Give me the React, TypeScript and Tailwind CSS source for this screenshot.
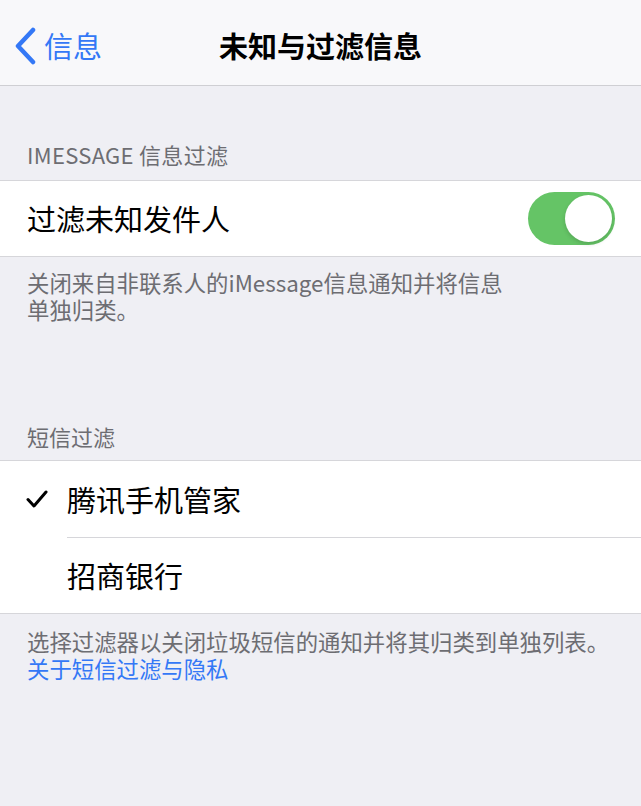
import React from "react";

const font = { fontFamily: '"Noto Sans CJK SC", "Inter", sans-serif' };

export default function App() {
  return (
    <div
      className="w-[641px] h-[806px] bg-[#efeff4] overflow-hidden"
      style={font}
    >
      {/* Nav bar */}
      <div className="relative h-[86px] bg-[#f8f8fa] border-b border-[#cfcfd3] flex items-center">
        <div className="flex items-center pl-[14px] pt-[6px] text-[#3478f6]">
          <svg width="24" height="38" viewBox="0 0 24 38">
            <path
              d="M19 3 L4 19 L19 35"
              fill="none"
              stroke="#3478f6"
              strokeWidth="4.5"
              strokeLinecap="round"
              strokeLinejoin="round"
            />
          </svg>
          <span className="ml-[6px] text-[29px] leading-none">信息</span>
        </div>
        <div className="absolute inset-0 flex items-center justify-center pt-[6px]">
          <span className="text-[29px] font-semibold leading-none text-black">
            未知与过滤信息
          </span>
        </div>
      </div>

      {/* Section 1 header */}
      <div className="h-[94px] flex items-end pb-[15px] pl-[27px]">
        <span className="text-[22px] leading-none text-[#6d6d72] tracking-[0.3px]">
          IMESSAGE 信息过滤
        </span>
      </div>

      {/* Section 1 group */}
      <div className="bg-white border-y border-[#d6d6da] h-[77px] flex items-center pl-[27px] pr-[26px]">
        <span className="flex-1 text-[29px] leading-none text-black">
          过滤未知发件人
        </span>
        <div className="w-[87px] h-[53px] rounded-full bg-[#65c466] relative">
          <div className="absolute right-[3px] top-[3px] w-[47px] h-[47px] rounded-full bg-white shadow-[0_2px_4px_rgba(0,0,0,0.15)]" />
        </div>
      </div>

      {/* Section 1 footer */}
      <div className="pl-[27px] pt-[12px] text-[22.4px] leading-[27px] text-[#6d6d72]">
        <div>关闭来自非联系人的iMessage信息通知并将信息</div>
        <div>单独归类。</div>
      </div>

      {/* Section 2 header */}
      <div className="h-[137px] flex items-end pb-[13px] pl-[27px]">
        <span className="text-[22px] leading-none text-[#6d6d72]">短信过滤</span>
      </div>

      {/* Section 2 group */}
      <div className="bg-white border-y border-[#d6d6da]">
        <div className="h-[76px] flex items-center">
          <div className="w-[67px] flex justify-start pl-[26px]">
            <svg width="22" height="20" viewBox="0 0 22 20">
              <path
                d="M2 10.5 L8 17 L20 3"
                fill="none"
                stroke="#000"
                strokeWidth="3"
                strokeLinecap="round"
                strokeLinejoin="round"
              />
            </svg>
          </div>
          <span className="text-[29px] leading-none text-black">腾讯手机管家</span>
        </div>
        <div className="ml-[67px] h-px bg-[#d6d6da]" />
        <div className="h-[75px] flex items-center pl-[67px]">
          <span className="text-[29px] leading-none text-black">招商银行</span>
        </div>
      </div>

      {/* Section 2 footer */}
      <div className="pl-[27px] pt-[14px] text-[22.4px] leading-[27px] text-[#6d6d72]">
        <div>选择过滤器以关闭垃圾短信的通知并将其归类到单独列表。</div>
        <div className="text-[#3478f6]">关于短信过滤与隐私</div>
      </div>
    </div>
  );
}
